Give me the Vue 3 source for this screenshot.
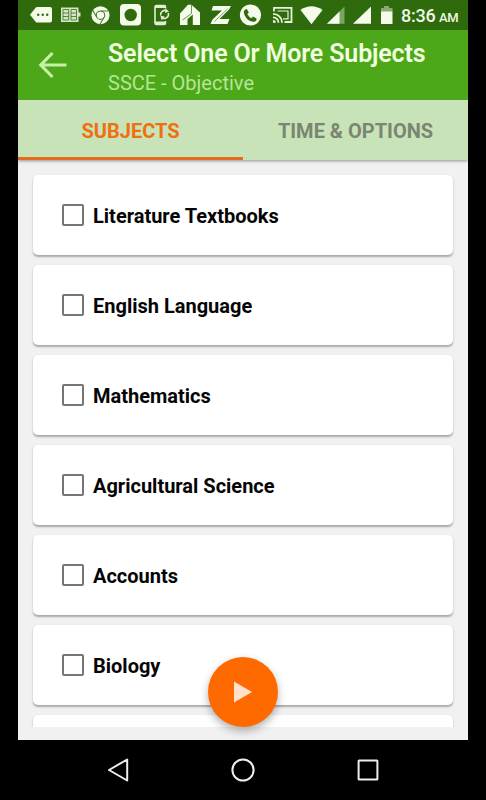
<script setup>
import { ref } from 'vue'

const tabs = ['SUBJECTS', 'TIME & OPTIONS']
const activeTab = ref(0)

const subjects = ref([
  { name: 'Literature Textbooks', checked: false },
  { name: 'English Language', checked: false },
  { name: 'Mathematics', checked: false },
  { name: 'Agricultural Science', checked: false },
  { name: 'Accounts', checked: false },
  { name: 'Biology', checked: false },
  { name: '', checked: false },
])
</script>

<template>
  <div class="device">
    <div class="screen">
      <!-- Status bar -->
      <div class="status-bar">
        <svg class="status-icons" width="376" height="30" viewBox="18 0 376 30" fill="#f4fbea">
          <!-- message -->
          <path d="M30 14.7 35.8 7.6Q36.3 7 37.200 7H50Q52 7 52 9V20.500Q52 22.500 50 22.500H37.200Q36.300 22.500 35.800 21.900Z" />
          <g fill="#2f6b0c">
            <circle cx="38.200" cy="14.700" r="1.200" />
            <circle cx="42.700" cy="14.700" r="1.200" />
            <circle cx="47.200" cy="14.700" r="1.200" />
          </g>
          <!-- newspaper -->
          <g opacity="0.85">
            <path d="M61 7.5H78.5V12.5H80.5V16.5H78.5V22H61Z" />
            <path d="M63 9.5H68.7V20H63ZM71 9.5H76.500V20H71ZM63 13H68.700M63 16.500H68.700M71 13H76.500M71 16.500H76.500" fill="none" stroke="#4c8130" stroke-width="0.900" />
          </g>
          <!-- chrome -->
          <circle cx="100.5" cy="15.2" r="9" />
          <g fill="none" stroke="#4c8130" stroke-width="1.1">
            <circle cx="100.5" cy="15.2" r="4.2" />
            <path d="M100.5 11H108.4M96.9 17.3 92.7 10.4M104.1 17.3 100 24.2" />
          </g>
          <!-- camera -->
          <path fill-rule="evenodd" d="M124 4H137Q141 4 141 8V21.5Q141 25.5 137 25.5H124Q120 25.5 120 21.5V8Q120 4 124 4ZM130.7 8.8A6.2 6.2 0 1 0 130.7 21.2 6.2 6.2 0 1 0 130.7 8.8Z" />
          <!-- phone sync -->
          <g fill="none" stroke="#e0edd2" stroke-width="1.6">
            <path d="M165.5 8.5V7Q165.5 5.5 164 5.5H156.500Q155 5.5 155 7V23Q155 24.5 156.500 24.5H164Q165.5 24.5 165.5 23V21" />
            <path d="M155 6.5H165.5M155 23H165.5" stroke-width="2.8" />
            <path d="M160.7 15.5A4.300 4.300 0 0 1 166.5 10.7M168.300 13A4.300 4.300 0 0 1 162.500 18.200" />
          </g>
          <path d="M165.500 8.500 169 11.500 165 13ZM160.500 15.800 164.800 16.500 161.500 20.200Z" fill="#e0edd2" />
          <!-- house -->
          <path d="M180 13.5 188 4.8H191.5L200 12.5V25H192.8V14.5L187.5 19V25H180Z" />
          <path d="M191.5 5V13.5L182.5 20" fill="none" stroke="#5c8c40" stroke-width="0.9" />
          <!-- z -->
          <path d="M213 6H231L229 9.5 219.5 19H229.5L227.5 24H210.5L212.5 19.5 222 10.5H211.5Z" />
          <path d="M227.5 9 214.5 21.5" stroke="#5c8c40" stroke-width="0.8" />
          <!-- call -->
          <circle cx="250.5" cy="15" r="10.6" />
          <path d="M246.8 9 248.9 12.5 247.3 14.1Q248.7 17 251.4 18.3L253 16.5 256.6 18.6Q256.8 21.4 253.8 21.8 249.5 21.8 246.3 18 243.5 14.5 243.8 11.5 244.3 9 246.8 9Z" fill="#2f6b0c" />
          <!-- cast -->
          <g fill="none" stroke="#e8f3dc" stroke-width="1.8">
            <path d="M274 11.5V7.8H291.5V22H284.5" />
            <path d="M273 13.8A9 9 0 0 1 282 22.8M273 17.3A5.5 5.5 0 0 1 278.5 22.8" />
            <path d="M277.5 11H288V18.8H283" stroke-width="1.2" />
          </g>
          <path d="M273 20A2.8 2.8 0 0 1 275.8 22.8H273Z" />
          <!-- wifi -->
          <path d="M300.5 10Q311.5 2.500 322.5 10L311.5 24.2Z" />
          <!-- signal -->
          <path d="M344.5 6.5V23.8H327Z" opacity="0.4" />
          <path d="M339.5 11.5V23.8H327Z" />
          <path d="M371 6.5V23.8H353Z" />
          <!-- battery -->
          <path d="M381 8H384V6H389V8H392.5V12H381Z" opacity="0.45" />
          <path d="M381 11.5H392.5V24H381Z" />
        </svg>
        <div class="clock">8:36 <span>AM</span></div>
      </div>

      <!-- App bar -->
      <header class="app-bar">
        <button class="back-btn" aria-label="Back">
          <svg width="30" height="28" viewBox="0 0 30 28" fill="none" stroke="#c8f0a8" stroke-width="3.2">
            <path d="M14.5 2 2.8 14 14.5 26M3 14H28.5" />
          </svg>
        </button>
        <div class="titles">
          <h1>Select One Or More Subjects</h1>
          <p>SSCE - Objective</p>
        </div>
      </header>

      <nav class="tabs">
        <button
          v-for="(tab, index) in tabs"
          :key="tab"
          class="tab"
          :class="{ active: activeTab === index }"
          @click="activeTab = index"
        >
          <span>{{ tab }}</span>
        </button>
      </nav>

      <main class="content">
        <div class="list">
          <label v-for="(subject, index) in subjects" :key="index" class="card">
            <input v-model="subject.checked" type="checkbox" />
            <span>{{ subject.name }}</span>
          </label>
        </div>
        <button class="fab" aria-label="Start">
          <svg width="18" height="22" viewBox="0 0 18 22">
            <path d="M0 0.5 18 11 0 21.5Z" fill="#ffe0cc" />
          </svg>
        </button>
      </main>
    </div>

    <!-- System navigation -->
    <footer class="nav-bar">
      <svg width="24" height="26" viewBox="0 0 24 26">
        <path d="M21.2 2.5V23.5L3 13Z" />
      </svg>
      <svg width="24" height="26" viewBox="0 0 24 26">
        <circle cx="12" cy="13" r="10.6" />
      </svg>
      <svg width="24" height="26" viewBox="0 0 24 26">
        <rect x="2.6" y="3.6" width="18.8" height="18.8" rx="0.5" />
      </svg>
    </footer>
  </div>
</template>

<style>
body {
  margin: 0;
  background: #000;
}
</style>

<style scoped>
.device {
  display: flex;
  flex-direction: column;
  width: 486px;
  height: 800px;
  overflow: hidden;
  background: #000;
  font-family: Roboto, 'Liberation Sans', sans-serif;
}

button {
  padding: 0;
  border: none;
  background: none;
  font-family: inherit;
  cursor: pointer;
}

.screen {
  display: flex;
  flex-direction: column;
  width: 450px;
  height: 740px;
  margin: 0 auto;
  background: #f1f1f1;
}

.status-bar {
  display: flex;
  align-items: center;
  height: 30px;
  background: #2f6b0c;
}

.status-icons {
  flex: none;
}

.clock {
  margin-left: 7px;
  padding-top: 3px;
  color: #f0f8e6;
  font-size: 18px;
  font-weight: 500;
  line-height: 30px;
  letter-spacing: -0.2px;
  white-space: nowrap;
}

.clock span {
  margin-left: -1px;
  font-size: 13px;
}

.app-bar {
  display: flex;
  height: 70px;
  background: #4ca719;
}

.back-btn {
  display: flex;
  align-items: center;
  width: 90px;
  padding-left: 20px;
  box-sizing: border-box;
}

.titles {
  padding-top: 9px;
}

.titles h1 {
  margin: 0;
  color: #f0ffdf;
  font-size: 25px;
  font-weight: 600;
  line-height: 30px;
  letter-spacing: -0.15px;
  white-space: nowrap;
}

.titles p {
  margin: 0;
  color: #b5e596;
  font-size: 20px;
  line-height: 29px;
}

.tabs {
  position: relative;
  z-index: 1;
  display: flex;
  height: 60px;
  background: #c8e3b7;
  box-shadow: 0 1px 3px rgba(0, 0, 0, 0.4);
  clip-path: inset(0 0 -8px 0);
}

.tab {
  flex: 1;
  padding-top: 4px;
  color: #7a8672;
  font-size: 20px;
  font-weight: 700;
  border-bottom: 3px solid transparent;
}

.tab.active {
  color: #ee700f;
  border-bottom-color: #e26b1c;
}

.content {
  position: relative;
  flex: 1;
  min-height: 0;
}

.list {
  display: flex;
  flex-direction: column;
  gap: 10px;
  height: 567px;
  box-sizing: border-box;
  padding: 15px 15px 0;
  overflow: hidden;
}

.card {
  flex: none;
  display: flex;
  align-items: center;
  height: 80px;
  padding-left: 29px;
  box-sizing: border-box;
  border-radius: 5px;
  background: #fff;
  box-shadow: 0 1.5px 2px rgba(0, 0, 0, 0.3);
  color: #050505;
  font-size: 20px;
  font-weight: 700;
}

.card span {
  padding-top: 2px;
}

.card input {
  appearance: none;
  width: 22px;
  height: 22px;
  margin: 0 9px 0 0;
  border: 2px solid #757575;
  border-radius: 2px;
}

.card input:checked {
  border-color: #ff6a00;
  background: #ff6a00;
}

.fab {
  position: absolute;
  left: 190px;
  bottom: 13px;
  display: flex;
  align-items: center;
  justify-content: center;
  width: 70px;
  height: 70px;
  border-radius: 50%;
  background: #ff6a00;
  box-shadow: 0 4px 8px rgba(0, 0, 0, 0.3);
}

.nav-bar {
  display: flex;
  align-items: center;
  justify-content: center;
  gap: 101px;
  height: 60px;
}

.nav-bar svg {
  fill: none;
  stroke: #eee;
  stroke-width: 2;
  stroke-linejoin: round;
}
</style>
